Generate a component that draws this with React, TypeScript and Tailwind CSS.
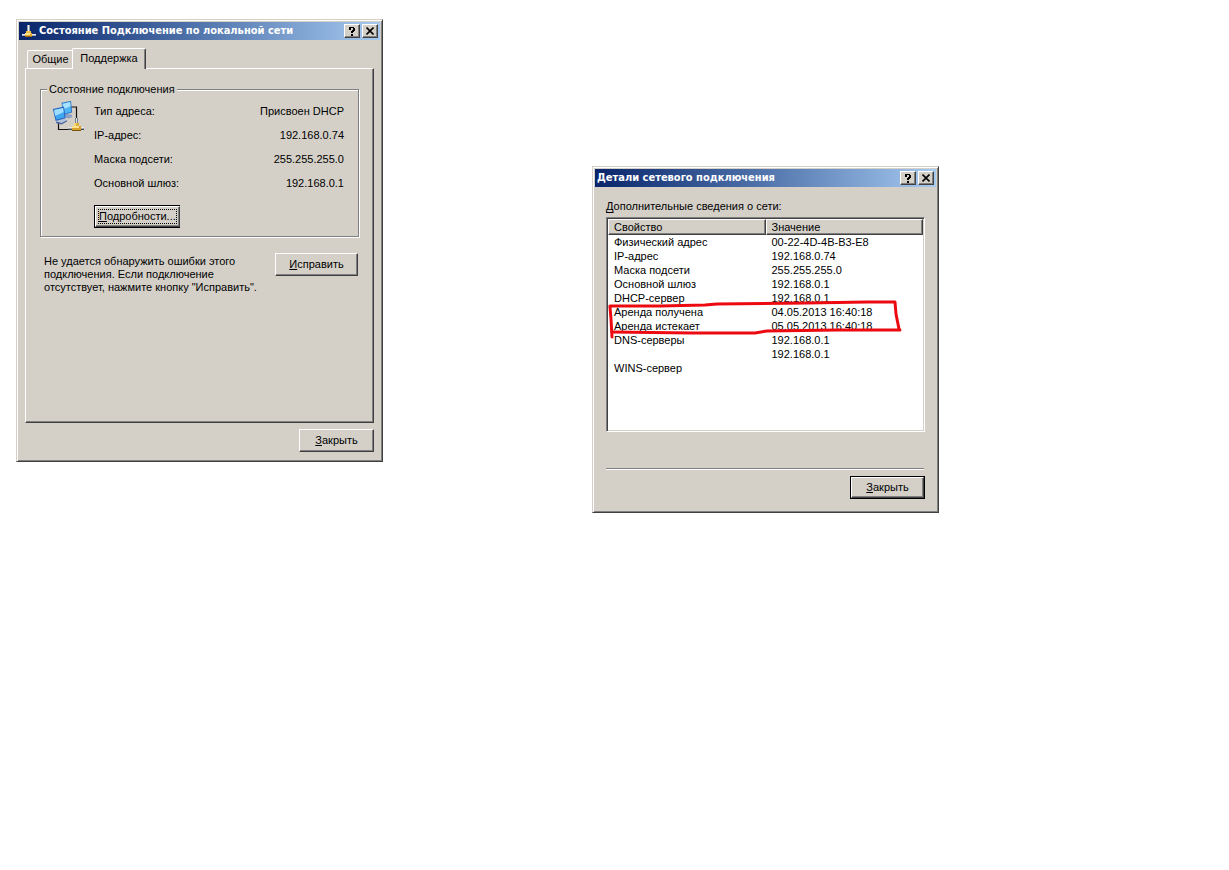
import React from 'react';
import clsx from 'clsx';

const connectionRows = [
  { label: 'Тип адреса:', value: 'Присвоен DHCP' },
  { label: 'IP-адрес:', value: '192.168.0.74' },
  { label: 'Маска подсети:', value: '255.255.255.0' },
  { label: 'Основной шлюз:', value: '192.168.0.1' },
];

const detailRows = [
  ['Физический адрес', '00-22-4D-4B-B3-E8'],
  ['IP-адрес', '192.168.0.74'],
  ['Маска подсети', '255.255.255.0'],
  ['Основной шлюз', '192.168.0.1'],
  ['DHCP-сервер', '192.168.0.1'],
  ['Аренда получена', '04.05.2013 16:40:18'],
  ['Аренда истекает', '05.05.2013 16:40:18'],
  ['DNS-серверы', '192.168.0.1'],
  ['', '192.168.0.1'],
  ['WINS-сервер', ''],
];

const raised =
  'border border-t-white border-l-white border-r-[#404040] border-b-[#404040] shadow-[inset_-1px_-1px_0_#808080]';

const PlugIcon = () => (
  <svg viewBox="0 0 16 16" className="w-4 h-4 shrink-0" aria-hidden="true">
    <path d="M6 2h3v7H6z" fill="#8f99a8" />
    <path d="M7 2h1v7H7z" fill="#eef2f7" />
    <path d="M1 11h14v1H1z" fill="#e4e6ea" />
    <path d="M1 12h14v1H1z" fill="#a5abb5" />
    <path d="M4 10h7v4H4z" fill="#e0a92c" />
    <path d="M5 8h5v3H5z" fill="#efc24c" />
    <path d="M4 10h5v2H4z" fill="#ffe388" />
    <path d="M4 13h7v1H4z" fill="#9a6c10" />
  </svg>
);

const NetworkIcon = () => (
  <svg viewBox="0 0 32 32" className="w-8 h-8" aria-hidden="true">
    <path d="M18 6h6.500v12" fill="none" stroke="#111" strokeWidth="1.200" />
    <path d="M6.500 20v8.500H17" fill="none" stroke="#111" strokeWidth="1.200" />
    <path d="M13 13l6.500 .5 1 2.500-4 1.500-4-1z" fill="#8c9fc6" />
    <path d="M9.500 1.800L19 -.2l1.200 11.800L11.500 14z" fill="#2f78c8" />
    <path d="M10.600 2.700L18.100 1l1 9.800-7 2z" fill="#4fb4f4" />
    <path d="M10.600 2.700L18.100 1l.5 4.200-7.500 3z" fill="#a9e2ff" />
    <path d="M5 18.500l7-1.500 3 2.500-5 3-5-1.500z" fill="#b4c2dc" />
    <path d="M4 20.500l5.500 1.500 5.500-2.800v1.400L9.500 23.600 4 21.900z" fill="#4a64a0" />
    <path d="M.8 8L12 5.600l1.600 11.600L3.600 20z" fill="#2a6abf" />
    <path d="M2 8.900L11.100 6.900l1.300 9.500-8 2.200z" fill="#3fa6f0" />
    <path d="M2 8.900L11.100 6.900l.6 4.400-8.500 3.400z" fill="#a0deff" />
    <path d="M23 17h3v7h-3z" fill="#777e88" />
    <path d="M24 17h1v7h-1z" fill="#dfe3e8" />
    <path d="M16 26h16v1H16z" fill="#e6e6e6" />
    <path d="M16 27h16v1H16z" fill="#a0a4ac" />
    <path d="M16 28h16v1H16z" fill="#444a54" />
    <path d="M20 25h9v5h-9z" fill="#d9a02a" />
    <path d="M22 22h5v4h-5z" fill="#dcae3c" />
    <path d="M22 22h2v4h-2z" fill="#f6d878" />
    <path d="M20 25h7v2h-7z" fill="#ffe38a" />
    <path d="M20 29h9v1h-9z" fill="#7a560e" />
  </svg>
);

const TitleButton = ({ label, children }: { label: string; children: React.ReactNode }) => (
  <button
    aria-label={label}
    className={clsx(raised, 'w-4 h-[14px] flex items-center justify-center bg-[#d4d0c8] text-black')}
  >
    {children}
  </button>
);

interface WindowProps {
  title: string;
  icon?: React.ReactNode;
  className: string;
  children: React.ReactNode;
}

const Window = ({ title, icon, className, children }: WindowProps) => (
  <section
    className={clsx(
      'absolute p-[2px] bg-[#d4d0c8] border border-t-[#d4d0c8] border-l-[#d4d0c8] border-r-[#404040] border-b-[#404040]',
      'shadow-[inset_1px_1px_0_#fff,inset_-1px_-1px_0_#808080]',
      className
    )}
  >
    <header className="h-[18px] flex items-center gap-[2px] px-[2px] bg-linear-to-r from-[#0a246a] to-[#a6caf0]">
      {icon}
      <h2 className="flex-1 font-['DejaVu_Sans_Condensed','DejaVu_Sans',sans-serif] text-[11px] leading-[18px] font-bold text-white whitespace-nowrap">
        {title}
      </h2>
      <TitleButton label="Справка">
        <svg viewBox="0 0 8 9" className="w-2 h-[9px]" aria-hidden="true">
          <path d="M1 0h5v1h1v3H6v1H5v1H3V4h1V3h1V1H3v2H1zM3 7h2v2H3z" fill="#000" />
        </svg>
      </TitleButton>
      <TitleButton label="Закрыть окно">
        <svg viewBox="0 0 8 8" className="w-2 h-2" aria-hidden="true">
          <path d="M.5 .5l7 7M7.500 .5l-7 7" stroke="#000" strokeWidth="1.600" />
        </svg>
      </TitleButton>
    </header>
    {children}
  </section>
);

interface DialogButtonProps {
  text: string;
  className?: string;
  isDefault?: boolean;
  focused?: boolean;
}

const DialogButton = ({ text, className, isDefault, focused }: DialogButtonProps) => (
  <button className={clsx('h-[23px] shrink-0 flex', isDefault && 'bg-black p-px', className)}>
    <span className={clsx(raised, 'flex-1 self-stretch flex bg-[#d4d0c8] p-[2px]')}>
      <span
        className={clsx(
          'flex-1 flex items-center justify-center whitespace-pre border border-dotted',
          focused ? 'border-black' : 'border-transparent'
        )}
      >
        <u className="underline-offset-1">{text[0]}</u>
        {text.slice(1)}
      </span>
    </span>
  </button>
);

const StatusWindow = () => (
  <Window
    title="Состояние Подключение по локальной сети"
    icon={<PlugIcon />}
    className="left-4 top-[19px] w-[367px]"
  >
    <div className="px-[6px] pt-2 pb-[7px]">
      <div role="tablist" className="flex items-start h-5 pl-[2px]">
        <button
          role="tab"
          aria-selected="false"
          className="mt-[2px] w-[46px] h-[18px] border-t border-l border-white rounded-tl-[2px]"
        >
          Общие
        </button>
        <button
          role="tab"
          aria-selected="true"
          className="relative z-10 -ml-px w-[74px] h-[21px] pb-[2px] bg-[#d4d0c8] border-t border-l border-r border-t-white border-l-white border-r-[#404040] shadow-[inset_-1px_0_0_#808080] rounded-t-[2px]"
        >
          Поддержка
        </button>
      </div>

      <div
        role="tabpanel"
        className="min-h-[355px] p-[14px] border border-t-white border-l-white border-r-[#404040] border-b-[#404040] shadow-[inset_-1px_-1px_0_#808080]"
      >
        <fieldset className="pl-[11px] pr-[14px] pt-[3px] pb-2 border border-[#808080] shadow-[1px_1px_0_#fff,inset_1px_1px_0_#fff]">
          <legend className="-ml-[5px] px-[2px] bg-[#d4d0c8]">Состояние подключения</legend>
          <div className="flex gap-[10px]">
            <div className="w-8 pt-[2px]">
              <NetworkIcon />
            </div>
            <div className="flex-1">
              <dl>
                {connectionRows.map((row) => (
                  <div key={row.label} className="h-6 flex items-center justify-between">
                    <dt>{row.label}</dt>
                    <dd>{row.value}</dd>
                  </div>
                ))}
              </dl>
              <DialogButton text="Подробности..." className="w-[86px] mt-[10px]" isDefault focused />
            </div>
          </div>
        </fieldset>

        <div className="mt-4 pl-1 pr-px flex justify-between items-start">
          <p className="w-[225px] pt-[2px]">
            Не удается обнаружить ошибки этого
            <br />
            подключения. Если подключение
            <br />
            отсутствует, нажмите кнопку "Исправить".
          </p>
          <DialogButton text="Исправить" className="w-[83px]" />
        </div>
      </div>

      <div className="mt-[6px] flex justify-end">
        <DialogButton text="Закрыть" className="w-[75px]" />
      </div>
    </div>
  </Window>
);

const DetailsWindow = () => (
  <Window title="Детали сетевого подключения" className="left-[592px] top-[166px] w-[347px]">
    <div className="px-[11px] pt-[13px] pb-[11px]">
      <p id="details-label" className="mb-1">
        <u className="underline-offset-2">Д</u>ополнительные сведения о сети:
      </p>
      <div className="relative min-h-[215px] bg-white border border-t-[#808080] border-l-[#808080] border-r-white border-b-white p-px shadow-[inset_1px_1px_0_#404040,inset_-1px_-1px_0_#d4d0c8]">
        <table aria-labelledby="details-label" className="w-full table-fixed border-separate border-spacing-0">
          <thead>
            <tr className="h-4 bg-[#d4d0c8]">
              <th className={clsx(raised, 'pl-[5px] py-0 text-left font-normal')}>Свойство</th>
              <th className={clsx(raised, 'pl-[5px] py-0 text-left font-normal')}>Значение</th>
            </tr>
          </thead>
          <tbody>
            {detailRows.map(([name, value], i) => (
              <tr key={i} className="h-[14px]">
                <td className="pl-[6px] py-0">{name}</td>
                <td className="pl-[6px] py-0">{value}</td>
              </tr>
            ))}
          </tbody>
        </table>

        {/* red marker around the lease rows */}
        <svg
          viewBox="0 0 300 44"
          className="absolute left-0 top-[80px] w-[300px] h-11 pointer-events-none"
          fill="none"
          stroke="#ec0a10"
          strokeWidth="3"
          strokeLinecap="round"
          strokeLinejoin="round"
          aria-hidden="true"
        >
          <path d="M3 8h50l45-1 12-1 90-1 60-1h28l1 12 3 15" />
          <path d="M3 9l1 12 1 18" />
          <path d="M5 34l80 1h63l12-2 70-1h63" />
        </svg>
      </div>
      <hr className="mt-9 mb-[6px] mr-px border-t border-t-[#808080] border-b border-b-white" />
      <div className="flex justify-end">
        <DialogButton text="Закрыть" className="w-[75px]" isDefault />
      </div>
    </div>
  </Window>
);

const App: React.FC = () => {
  return (
    <main className="relative min-h-screen bg-white text-black font-['Liberation_Sans',Arial,sans-serif] text-[11px] leading-[13px]">
      <StatusWindow />
      <DetailsWindow />
    </main>
  );
};

export default App;
